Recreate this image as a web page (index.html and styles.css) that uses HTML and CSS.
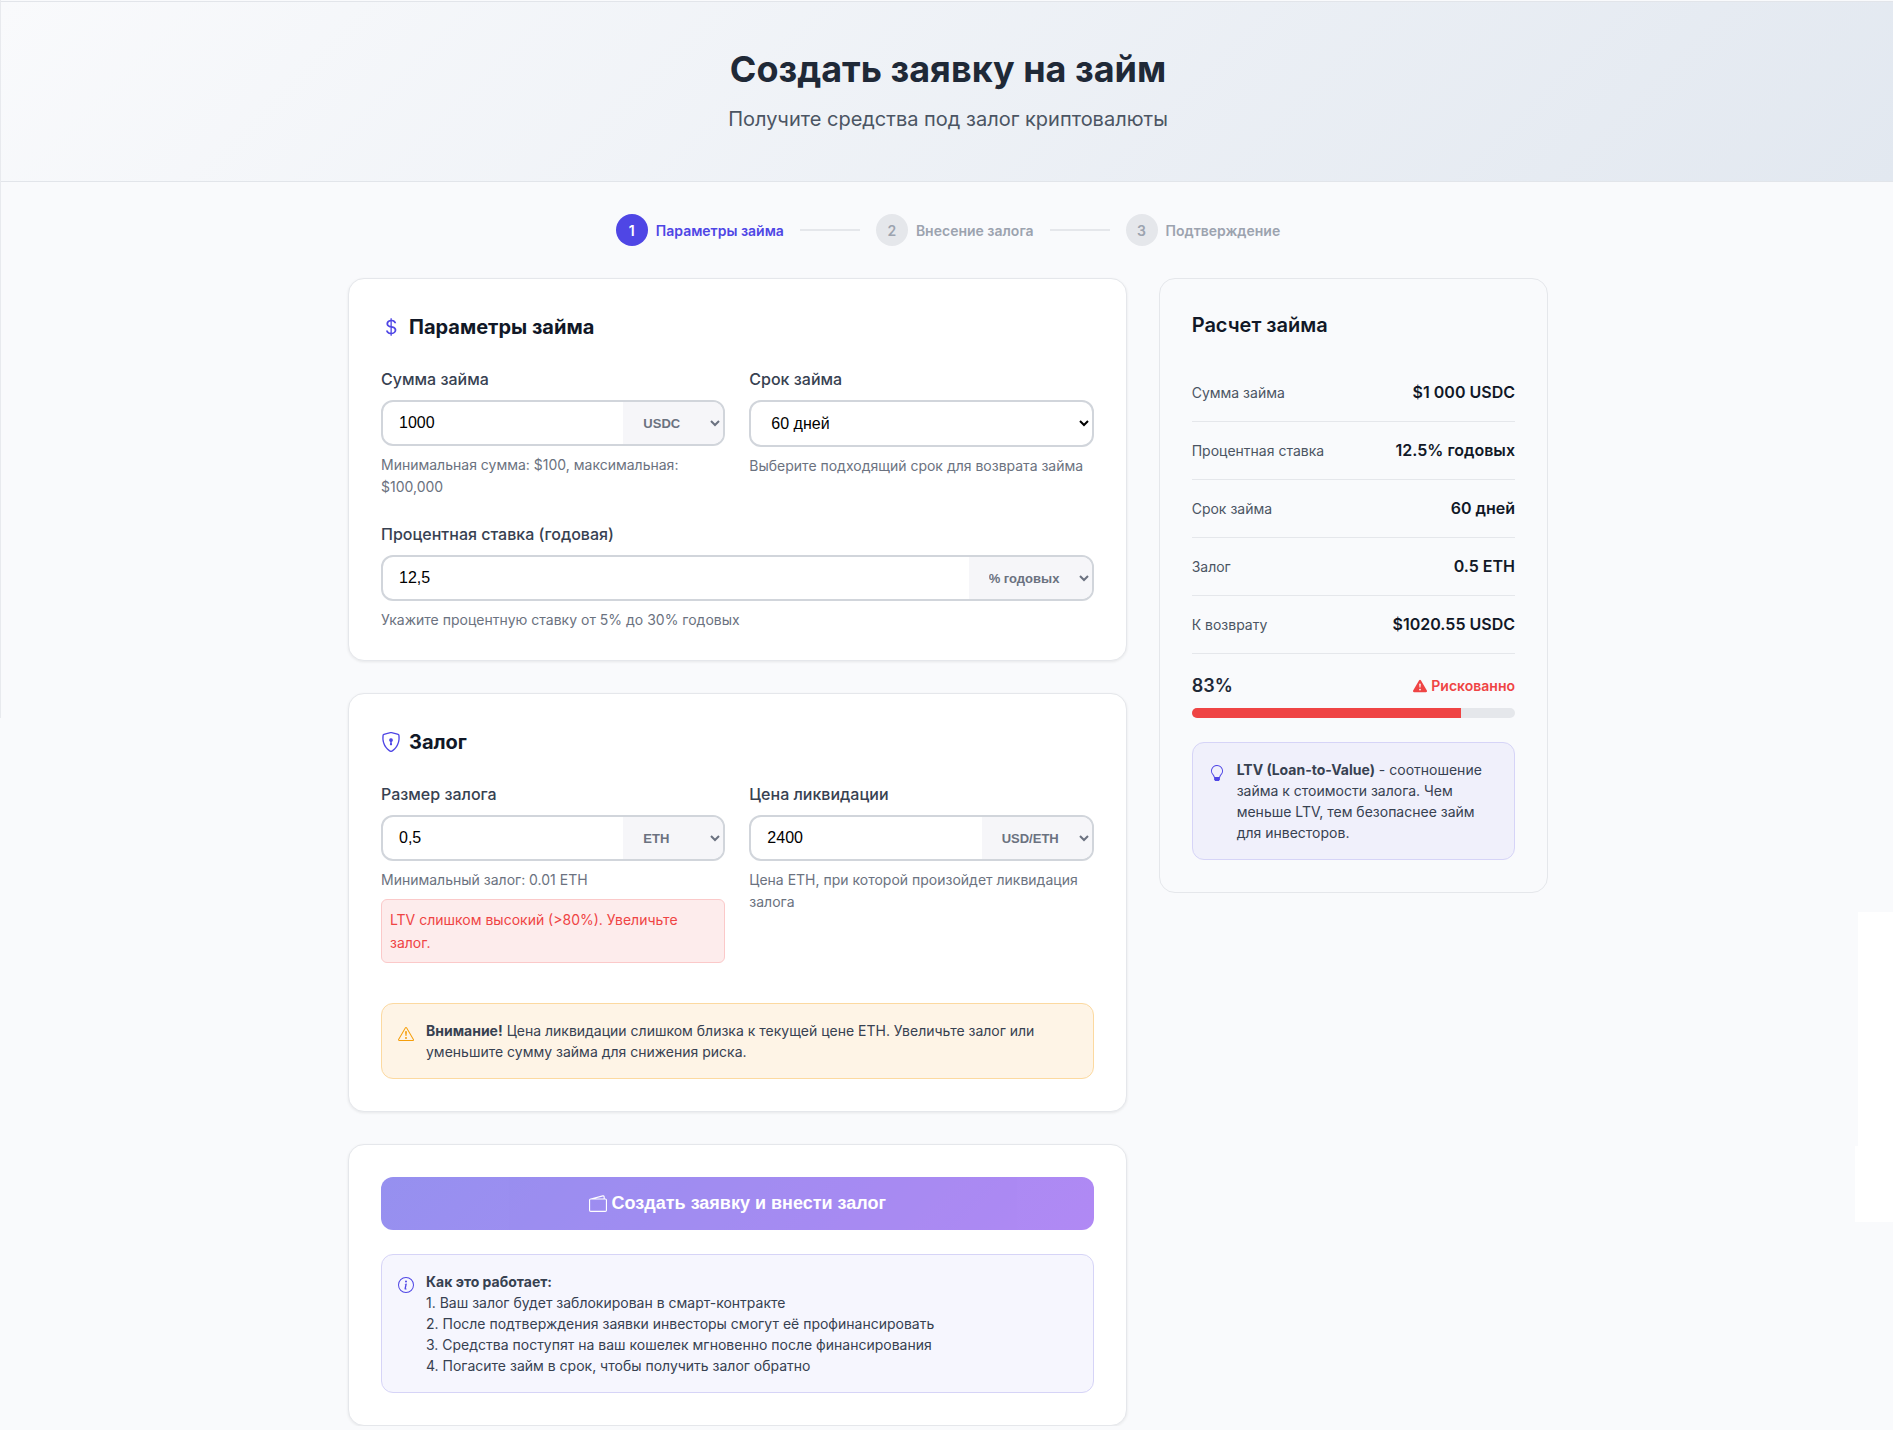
FILE: index.html
```html
<!DOCTYPE html>
<html lang="ru">
<head>
<meta charset="utf-8">
<meta name="viewport" content="width=device-width, initial-scale=1">
<title>Создать заявку на займ</title>
<link rel="stylesheet" href="styles.css">
</head>
<body>
<div class="page">
  <header class="hero">
    <h1>Создать заявку на займ</h1>
    <p>Получите средства под залог криптовалюты</p>
  </header>

  <main class="container">
    <ol class="steps">
      <li class="step step-active"><span class="step-number">1</span>Параметры займа</li>
      <li class="step"><span class="step-number">2</span>Внесение залога</li>
      <li class="step"><span class="step-number">3</span>Подтверждение</li>
    </ol>

    <div class="layout">
      <form class="forms">
        <section class="card card-params">
          <h2 class="card-title">
            <svg class="icon icon-title" viewBox="0 0 16 16" aria-hidden="true"><path d="M4 10.781c.148 1.667 1.513 2.85 3.591 3.003V15h1.043v-1.216c2.27-.179 3.678-1.438 3.678-3.3 0-1.59-.947-2.51-2.956-3.028l-.722-.187V3.467c1.122.11 1.879.714 2.07 1.616h1.47c-.166-1.6-1.54-2.748-3.54-2.875V1H7.591v1.233c-1.939.23-3.27 1.472-3.27 3.156 0 1.454.966 2.483 2.661 2.917l.61.162v4.031c-1.149-.17-1.94-.8-2.131-1.718H4zm3.391-3.836c-1.043-.263-1.6-.825-1.6-1.616 0-.944.704-1.641 1.8-1.828v3.495l-.2-.05zm1.591 1.872c1.287.323 1.852.859 1.852 1.769 0 1.097-.826 1.828-2.2 1.939V8.73l.348.086z"/></svg>
            Параметры займа
          </h2>
          <div class="row">
            <div class="field">
              <label for="amount">Сумма займа</label>
              <div class="group">
                <input id="amount" type="text" inputmode="decimal" value="1000">
                <select aria-label="Валюта займа"><option>USDC</option></select>
              </div>
              <p class="help">Минимальная сумма: $100, максимальная: $100,000</p>
            </div>
            <div class="field">
              <label for="term">Срок займа</label>
              <select id="term" class="select"><option>60 дней</option></select>
              <p class="help">Выберите подходящий срок для возврата займа</p>
            </div>
          </div>
          <div class="field">
            <label for="rate">Процентная ставка (годовая)</label>
            <div class="group">
              <input id="rate" type="text" inputmode="decimal" value="12,5">
              <select aria-label="Единица ставки"><option>% годовых</option></select>
            </div>
            <p class="help">Укажите процентную ставку от 5% до 30% годовых</p>
          </div>
        </section>

        <section class="card">
          <h2 class="card-title">
            <svg class="icon icon-title" viewBox="0 0 16 16" aria-hidden="true"><path d="M5.338 1.59a61.44 61.44 0 0 0-2.837.856.481.481 0 0 0-.328.39c-.554 4.157.726 7.19 2.253 9.188a10.725 10.725 0 0 0 2.287 2.233c.346.244.652.42.893.533.12.057.218.095.293.118a.55.55 0 0 0 .101.025.615.615 0 0 0 .1-.025c.076-.023.174-.061.294-.118.24-.113.547-.29.893-.533a10.726 10.726 0 0 0 2.287-2.233c1.527-1.997 2.807-5.031 2.253-9.188a.48.48 0 0 0-.328-.39c-.651-.213-1.75-.56-2.837-.855C9.552 1.29 8.531 1.067 8 1.067c-.53 0-1.552.223-2.662.524zM5.072.56C6.157.265 7.31 0 8 0s1.843.265 2.928.56c1.11.3 2.229.655 2.887.87a1.54 1.54 0 0 1 1.044 1.262c.596 4.477-.787 7.795-2.465 9.99a11.775 11.775 0 0 1-2.517 2.453 7.159 7.159 0 0 1-1.048.625c-.28.132-.581.24-.829.24s-.548-.108-.829-.24a7.158 7.158 0 0 1-1.048-.625 11.777 11.777 0 0 1-2.517-2.453C1.928 10.487.545 7.169 1.141 2.692A1.54 1.54 0 0 1 2.185 1.43 62.456 62.456 0 0 1 5.072.56z"/><path d="M9.5 6.5a1.5 1.5 0 0 1-1 1.415l.385 1.99a.5.5 0 0 1-.491.595h-.788a.5.5 0 0 1-.49-.595l.384-1.99a1.5 1.5 0 1 1 2-1.415z"/></svg>
            Залог
          </h2>
          <div class="row">
            <div class="field">
              <label for="collateral">Размер залога</label>
              <div class="group">
                <input id="collateral" type="text" inputmode="decimal" value="0,5">
                <select aria-label="Валюта залога"><option>ETH</option></select>
              </div>
              <p class="help">Минимальный залог: 0.01 ETH</p>
              <p class="error" role="alert">LTV слишком высокий (&gt;80%). Увеличьте залог.</p>
            </div>
            <div class="field">
              <label for="liquidation">Цена ликвидации</label>
              <div class="group">
                <input id="liquidation" type="text" inputmode="decimal" value="2400">
                <select aria-label="Единица цены"><option>USD/ETH</option></select>
              </div>
              <p class="help">Цена ETH, при которой произойдет ликвидация залога</p>
            </div>
          </div>
          <div class="note note-warning">
            <svg class="icon" viewBox="0 0 16 16" aria-hidden="true"><path d="M7.938 2.016A.13.13 0 0 1 8.002 2a.13.13 0 0 1 .063.016.146.146 0 0 1 .054.057l6.857 11.667c.036.06.035.124.002.183a.163.163 0 0 1-.054.06.116.116 0 0 1-.066.017H1.146a.115.115 0 0 1-.066-.017.163.163 0 0 1-.054-.06.176.176 0 0 1 .002-.183L7.884 2.073a.147.147 0 0 1 .054-.057zm1.044-.45a1.13 1.13 0 0 0-1.96 0L.165 13.233c-.457.778.091 1.767.98 1.767h13.713c.889 0 1.438-.99.98-1.767L8.982 1.566z"/><path d="M7.002 12a1 1 0 1 1 2 0 1 1 0 0 1-2 0zM7.1 5.995a.905.905 0 1 1 1.8 0l-.35 3.507a.552.552 0 0 1-1.1 0L7.1 5.995z"/></svg>
            <p><strong>Внимание!</strong> Цена ликвидации слишком близка к текущей цене ETH. Увеличьте залог или уменьшите сумму займа для снижения риска.</p>
          </div>
        </section>

        <section class="card">
          <button class="submit" type="button">
            <svg class="icon icon-button" viewBox="0 0 16 16" aria-hidden="true"><path d="M12.136.326A1.5 1.5 0 0 1 14 1.78V3h.5A1.5 1.5 0 0 1 16 4.5v9a1.5 1.5 0 0 1-1.5 1.5h-13A1.5 1.5 0 0 1 0 13.5v-9a1.5 1.5 0 0 1 1.432-1.499L12.136.326zM5.562 3H13V1.78a.5.5 0 0 0-.621-.484L5.562 3zM1.5 4a.5.5 0 0 0-.5.5v9a.5.5 0 0 0 .5.5h13a.5.5 0 0 0 .5-.5v-9a.5.5 0 0 0-.5-.5h-13z"/></svg>
            Создать заявку и внести залог
          </button>
          <div class="note note-info">
            <svg class="icon" viewBox="0 0 16 16" aria-hidden="true"><path d="M8 15A7 7 0 1 1 8 1a7 7 0 0 1 0 14zm0 1A8 8 0 1 0 8 0a8 8 0 0 0 0 16z"/><path d="m8.93 6.588-2.29.287-.082.38.45.083c.294.07.352.176.288.469l-.738 3.468c-.194.897.105 1.319.808 1.319.545 0 1.178-.252 1.465-.598l.088-.416c-.2.176-.492.246-.686.246-.275 0-.375-.193-.304-.533L8.93 6.588zM9 4.5a1 1 0 1 1-2 0 1 1 0 0 1 2 0z"/></svg>
            <p><strong>Как это работает:</strong><br>
            1. Ваш залог будет заблокирован в смарт-контракте<br>
            2. После подтверждения заявки инвесторы смогут её профинансировать<br>
            3. Средства поступят на ваш кошелек мгновенно после финансирования<br>
            4. Погасите займ в срок, чтобы получить залог обратно</p>
          </div>
        </section>
      </form>

      <aside class="card summary">
        <h2 class="summary-title">Расчет займа</h2>
        <dl class="totals">
          <div class="total"><dt>Сумма займа</dt><dd>$1 000 USDC</dd></div>
          <div class="total"><dt>Процентная ставка</dt><dd>12.5% годовых</dd></div>
          <div class="total"><dt>Срок займа</dt><dd>60 дней</dd></div>
          <div class="total"><dt>Залог</dt><dd>0.5 ETH</dd></div>
          <div class="total"><dt>К возврату</dt><dd>$1020.55 USDC</dd></div>
        </dl>
        <div class="ltv">
          <span class="ltv-value">83%</span>
          <span class="ltv-status">
            <svg class="icon icon-status" viewBox="0 0 16 16" aria-hidden="true"><path d="M8.982 1.566a1.13 1.13 0 0 0-1.96 0L.165 13.233c-.457.778.091 1.767.98 1.767h13.713c.889 0 1.438-.99.98-1.767L8.982 1.566zM8 5c.535 0 .954.462.9.995l-.35 3.507a.552.552 0 0 1-1.1 0L7.1 5.995A.905.905 0 0 1 8 5zm.002 6a1 1 0 1 1 0 2 1 1 0 0 1 0-2z"/></svg>
            Рискованно
          </span>
        </div>
        <div class="bar"><div class="bar-fill" style="width: 83.3%"></div></div>
        <div class="note note-ltv">
          <svg class="icon" viewBox="0 0 16 16" aria-hidden="true"><path d="M2 6a6 6 0 1 1 10.174 4.31c-.203.196-.359.4-.453.619l-.762 1.769A.5.5 0 0 1 10.5 13a.5.5 0 0 1 0 1 .5.5 0 0 1 0 1l-.224.447a1 1 0 0 1-.894.553H6.618a1 1 0 0 1-.894-.553L5.5 15a.5.5 0 0 1 0-1 .5.5 0 0 1 0-1 .5.5 0 0 1-.46-.302l-.761-1.77a1.964 1.964 0 0 0-.453-.618A5.984 5.984 0 0 1 2 6zm6-5a5 5 0 0 0-3.479 8.592c.263.254.514.564.676.941L5.83 12h4.342l.632-1.467c.162-.377.413-.687.676-.941A5 5 0 0 0 8 1z"/></svg>
          <p><strong>LTV (Loan-to-Value)</strong> - соотношение займа к стоимости залога. Чем меньше LTV, тем безопаснее займ для инвесторов.</p>
        </div>
      </aside>
    </div>
  </main>
  <div class="edge-line"></div>
  <div class="edge-panel edge-panel-top"></div>
  <div class="edge-panel edge-panel-bottom"></div>
</div>
</body>
</html>
```
FILE: styles.css
```css
* {
  box-sizing: border-box;
}

body {
  margin: 0;
  background: #f9fafc;
  color: #111827;
  font: 16px/25px Inter, sans-serif;
}

h1, h2, p, ol, dl, dd {
  margin: 0;
  padding: 0;
}

.page {
  position: relative;
  padding: 1px 0 0 1px;
  overflow: hidden;
}

.hero {
  padding: 38px 16px 46px 18px;
  border: solid #e2e5ea;
  border-width: 1px 0;
  background: linear-gradient(135deg, #f9fafc, #e2e8f0);
  text-align: center;
}

.hero h1 {
  margin-bottom: 5px;
  color: #1f2937;
  font-size: 36px;
  font-weight: 700;
  line-height: 58px;
}

.hero p {
  color: #4b5563;
  font-size: 20px;
  line-height: 32px;
}

.container {
  max-width: 1202px;
  margin: 0 auto;
  padding-left: 2px;
}

.steps {
  display: flex;
  justify-content: center;
  gap: 16px;
  padding: 32px 0;
  list-style: none;
}

.step {
  display: flex;
  align-items: center;
  gap: 8px;
  color: #9ca3af;
  font-size: 14px;
  font-weight: 600;
}

.step-active {
  color: #4f46e5;
}

.step:not(:last-child)::after {
  content: "";
  width: 60px;
  height: 2px;
  margin-left: 8px;
  background: #e5e7eb;
}

.step-number {
  display: grid;
  place-items: center;
  width: 32px;
  height: 32px;
  border-radius: 50%;
  background: #e5e7eb;
}

.step-active .step-number {
  background: #4f46e5;
  color: #fff;
}

.layout {
  display: grid;
  grid-template-columns: minmax(0, 2fr) minmax(0, 1fr);
  align-items: start;
  gap: 32px;
}

.forms {
  display: grid;
  gap: 32px;
}

.card {
  padding: 32px;
  border: 1px solid #e5e7eb;
  border-radius: 16px;
  background: #fff;
  box-shadow: 0 1px 3px rgba(0, 0, 0, 0.08);
}

.card-params {
  padding-bottom: 29px;
}

.icon {
  flex: none;
  width: 16px;
  height: 16px;
  fill: currentColor;
}

.card-title {
  display: flex;
  align-items: center;
  gap: 8px;
  margin-bottom: 24px;
  font-size: 20px;
  font-weight: 700;
  line-height: 32px;
}

.icon-title {
  width: 20px;
  height: 20px;
  color: #4f46e5;
}

.row {
  display: grid;
  grid-template-columns: repeat(2, minmax(0, 1fr));
  gap: 24px;
  margin-bottom: 24px;
}

.field label {
  display: block;
  margin-bottom: 8px;
  color: #374151;
  font-weight: 500;
}

.group,
.select {
  width: 100%;
  border: 2px solid #d1d5db;
  border-radius: 12px;
  background: #fff;
}

.group {
  display: flex;
  overflow: hidden;
}

.group input {
  flex: 1;
  min-width: 0;
  padding: 12px 16px;
  border: 0;
  background: transparent;
  color: #000;
  font: 16px/18px "Liberation Sans", sans-serif;
}

.group select {
  min-width: 100px;
  padding: 0 16px;
  border: 0;
  background: #f6f6f9;
  color: #6b7280;
  font: 600 13px "Liberation Sans", sans-serif;
}

.select {
  display: block;
  height: 47px;
  padding: 0 16px;
  color: #000;
  font: 16px "Liberation Sans", sans-serif;
}

.help {
  margin-top: 8px;
  color: #6b7280;
  font-size: 14px;
  line-height: 22px;
}

.error {
  margin-top: 8px;
  padding: 8px;
  border: 1px solid #fbc9c9;
  border-radius: 6px;
  background: #fdecec;
  color: #ef4444;
  font-size: 14px;
  line-height: 23px;
}

.note {
  display: flex;
  gap: 12px;
  padding: 16px;
  border: 1px solid #d6d4f7;
  border-radius: 12px;
  color: #374151;
  font-size: 14px;
  line-height: 21px;
}

.note .icon {
  margin-top: 6px;
  color: #4f46e5;
}

.note-warning {
  margin-top: 40px;
  border-color: #fcd9a0;
  background: #fef4e6;
}

.note-warning .icon {
  color: #f59e0b;
}

.note-info {
  margin-top: 24px;
  background: #f6f6fe;
}

.note-ltv {
  margin-top: 24px;
  background: #f0f0fb;
}

.submit {
  display: flex;
  align-items: center;
  justify-content: center;
  gap: 5px;
  width: 100%;
  padding: 16px;
  border: 0;
  border-radius: 12px;
  background: linear-gradient(135deg, #4f46e5, #7c3aed);
  color: #fff;
  font: 600 18px/21px "Liberation Sans", sans-serif;
  opacity: 0.6;
}

.icon-button {
  width: 18px;
  height: 18px;
}

.summary {
  background: #f9fafc;
  box-shadow: none;
}

.summary-title {
  margin-bottom: 25px;
  font-size: 20px;
  font-weight: 600;
  line-height: 28px;
}

.total {
  display: flex;
  align-items: center;
  justify-content: space-between;
  padding: 16px 0;
  border-bottom: 1px solid #e5e7eb;
}

.total dt {
  color: #4b5563;
  font-size: 14px;
}

.total dd {
  font-weight: 600;
}

.ltv {
  display: flex;
  align-items: center;
  justify-content: space-between;
  margin: 18px 0 8px;
  line-height: 28px;
}

.ltv-value {
  color: #1f2937;
  font-size: 18px;
  font-weight: 600;
}

.ltv-status {
  display: flex;
  align-items: center;
  gap: 4px;
  color: #ef4444;
  font-size: 14px;
  font-weight: 600;
}

.icon-status {
  width: 14px;
  height: 14px;
}

.bar {
  overflow: hidden;
  height: 10px;
  border-radius: 5px;
  background: #e5e7eb;
}

.bar-fill {
  height: 100%;
  background: #ef4444;
}

/* hairline down the left edge of the first screen */
.edge-line {
  position: absolute;
  top: 0;
  left: 0;
  width: 1px;
  height: 718px;
  background: #e8eaee;
}

/* white panels that overlap the right edge of the page */
.edge-panel {
  position: absolute;
  right: 0;
  background: #fff;
}

.edge-panel-top {
  top: 912px;
  width: 35px;
  height: 234px;
}

.edge-panel-bottom {
  top: 1146px;
  width: 38px;
  height: 76px;
}
```
